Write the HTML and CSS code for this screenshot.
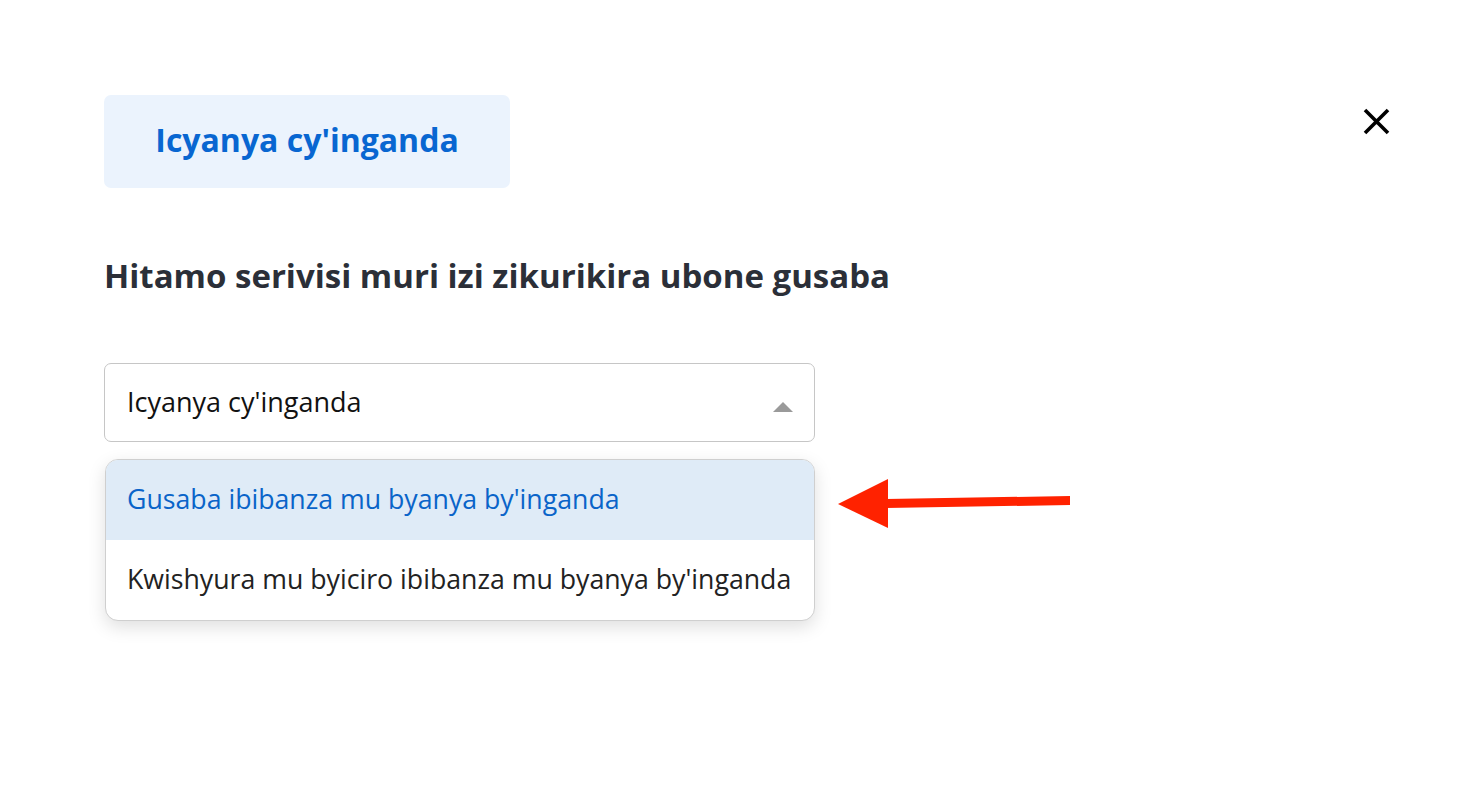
FILE: index.html
```html
<!DOCTYPE html>
<html lang="rw">
<head>
<meta charset="utf-8">
<title>Icyanya cy'inganda</title>
<link rel="stylesheet" href="styles.css">
</head>
<body>
<div class="page">
  <div class="header">
    <div class="tab">Icyanya cy'inganda</div>
    <button class="close" aria-label="Close">
      <svg width="27" height="27" viewBox="0 0 27 27"><path d="M2 2 L25 25 M25 2 L2 25" stroke="#000" stroke-width="3.6" stroke-linecap="butt"/></svg>
    </button>
  </div>
  <h2 class="title">Hitamo serivisi muri izi zikurikira ubone gusaba</h2>
  <div class="field">
    <div class="select">
      <span class="select-value">Icyanya cy'inganda</span>
      <span class="caret"></span>
    </div>
    <ul class="menu">
      <li class="option active">Gusaba ibibanza mu byanya by'inganda</li>
      <li class="option">Kwishyura mu byiciro ibibanza mu byanya by'inganda</li>
    </ul>
    <svg class="pointer" width="240" height="60" viewBox="0 0 240 60">
      <polygon points="0,27 50,2 50,51" fill="#ff2200"/>
      <polygon points="48,22 232,19 232,28 48,31" fill="#ff2200"/>
    </svg>
  </div>
</div>
</body>
</html>
```

FILE: styles.css
```css
html, body {
  margin: 0;
  padding: 0;
  background: #ffffff;
}

body {
  font-family: "Open Sans", "Noto Sans", "Liberation Sans", sans-serif;
  color: #222;
}

.page {
  padding: 95px 68px 0 104px;
  min-height: 792px;
  box-sizing: border-box;
}

.header {
  display: flex;
  justify-content: space-between;
  align-items: flex-start;
}

.tab {
  width: 406px;
  height: 93px;
  box-sizing: border-box;
  background: #ebf3fd;
  border-radius: 7px;
  color: #0866d1;
  font-weight: 700;
  font-size: 32px;
  display: flex;
  align-items: center;
  justify-content: center;
  padding-bottom: 4px;
}

.close {
  margin-top: 13px;
  padding: 0;
  border: 0;
  background: none;
  width: 27px;
  height: 27px;
  display: block;
}

.close svg {
  display: block;
}

.title {
  margin: 68px 0 0 0;
  font-size: 33px;
  line-height: 40px;
  font-weight: 700;
  color: #2b2f38;
}

.field {
  position: relative;
  width: 711px;
  margin-top: 67px;
}

.select {
  height: 79px;
  box-sizing: border-box;
  border: 1.5px solid #c6c6c6;
  border-radius: 7px;
  display: flex;
  align-items: center;
  justify-content: space-between;
  padding: 0 21px 0 22px;
}

.select-value {
  font-size: 27px;
  color: #111;
  padding-bottom: 3px;
}

.caret {
  width: 0;
  height: 0;
  border-left: 10px solid transparent;
  border-right: 10px solid transparent;
  border-bottom: 10px solid #9a9a9a;
  margin-top: 8px;
}

.menu {
  list-style: none;
  margin: 17px 0 0 1px;
  padding: 0;
  border: 1.5px solid #cfcfcf;
  border-radius: 13px;
  overflow: hidden;
  box-shadow: 0 6px 18px rgba(0, 0, 0, 0.13);
  background: #fff;
}

.option {
  height: 80px;
  display: flex;
  align-items: center;
  padding: 0 0 3px 21px;
  box-sizing: border-box;
  font-size: 26.7px;
  white-space: nowrap;
  color: #222;
}

.option.active {
  background: #dfebf7;
  color: #0a64c9;
}

.pointer {
  position: absolute;
  left: 734px;
  top: 114px;
}
```
